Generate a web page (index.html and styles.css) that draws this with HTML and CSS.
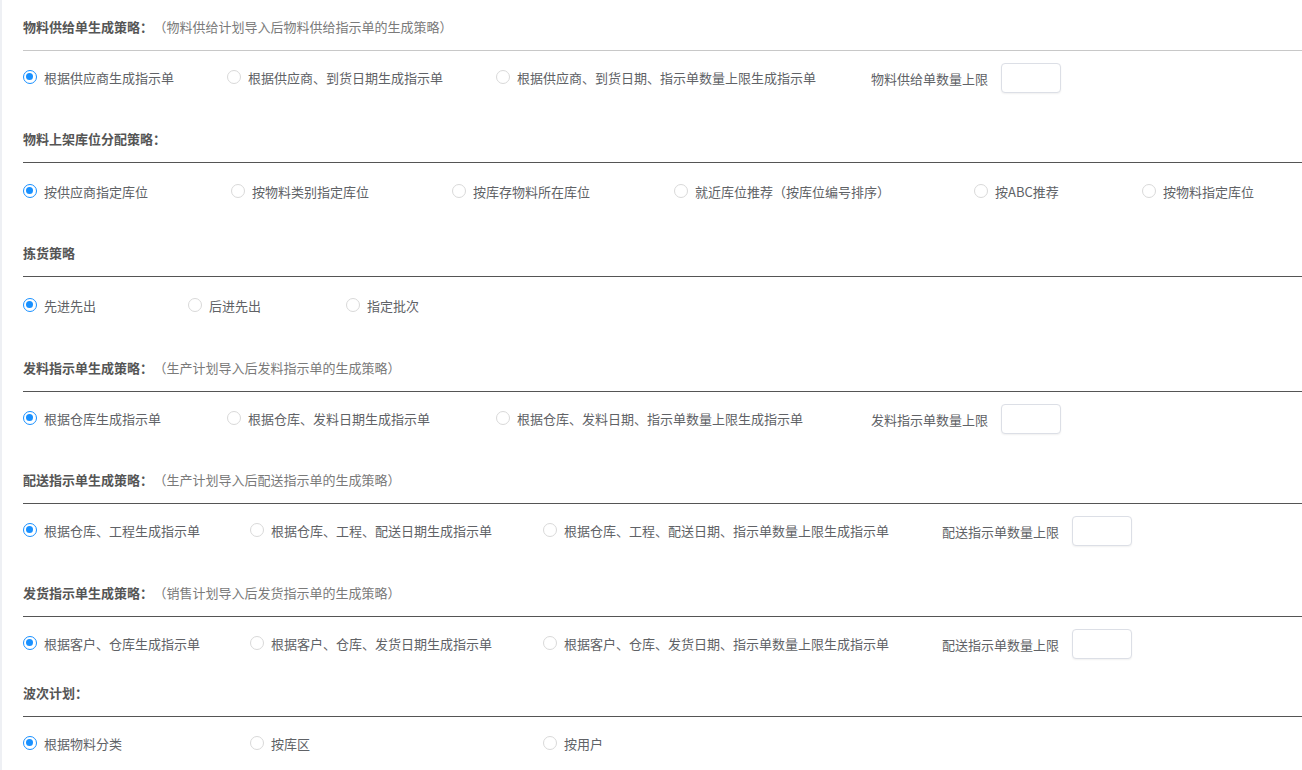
FILE: index.html
```html
<!DOCTYPE html>
<html lang="zh-CN">
<head>
<meta charset="utf-8">
<title>策略配置</title>
<link rel="stylesheet" href="styles.css">
</head>
<body>
<div class="page">

  <section class="sec">
    <div class="head light"><span class="title">物料供给单生成策略：</span><span class="sub">（物料供给计划导入后物料供给指示单的生成策略）</span></div>
    <div class="row">
      <label class="opt w204"><span class="radio on"></span>根据供应商生成指示单</label>
      <label class="opt w269"><span class="radio"></span>根据供应商、到货日期生成指示单</label>
      <label class="opt w375"><span class="radio"></span>根据供应商、到货日期、指示单数量上限生成指示单</label>
      <span class="lim">物料供给单数量上限</span><input class="num" type="text">
    </div>
  </section>

  <section class="sec">
    <div class="head"><span class="title">物料上架库位分配策略：</span></div>
    <div class="row low">
      <label class="opt w208"><span class="radio on"></span>按供应商指定库位</label>
      <label class="opt w221"><span class="radio"></span>按物料类别指定库位</label>
      <label class="opt w222"><span class="radio"></span>按库存物料所在库位</label>
      <label class="opt w300"><span class="radio"></span>就近库位推荐（按库位编号排序）</label>
      <label class="opt w168"><span class="radio"></span>按ABC推荐</label>
      <label class="opt"><span class="radio"></span>按物料指定库位</label>
    </div>
  </section>

  <section class="sec wide">
    <div class="head"><span class="title">拣货策略</span></div>
    <div class="row low">
      <label class="opt w165"><span class="radio on"></span>先进先出</label>
      <label class="opt w158"><span class="radio"></span>后进先出</label>
      <label class="opt"><span class="radio"></span>指定批次</label>
    </div>
  </section>

  <section class="sec">
    <div class="head"><span class="title">发料指示单生成策略：</span><span class="sub">（生产计划导入后发料指示单的生成策略）</span></div>
    <div class="row">
      <label class="opt w204"><span class="radio on"></span>根据仓库生成指示单</label>
      <label class="opt w269"><span class="radio"></span>根据仓库、发料日期生成指示单</label>
      <label class="opt w375"><span class="radio"></span>根据仓库、发料日期、指示单数量上限生成指示单</label>
      <span class="lim">发料指示单数量上限</span><input class="num" type="text">
    </div>
  </section>

  <section class="sec wide">
    <div class="head"><span class="title">配送指示单生成策略：</span><span class="sub">（生产计划导入后配送指示单的生成策略）</span></div>
    <div class="row">
      <label class="opt w227"><span class="radio on"></span>根据仓库、工程生成指示单</label>
      <label class="opt w293"><span class="radio"></span>根据仓库、工程、配送日期生成指示单</label>
      <label class="opt w399"><span class="radio"></span>根据仓库、工程、配送日期、指示单数量上限生成指示单</label>
      <span class="lim">配送指示单数量上限</span><input class="num" type="text">
    </div>
  </section>

  <section class="sec short">
    <div class="head"><span class="title">发货指示单生成策略：</span><span class="sub">（销售计划导入后发货指示单的生成策略）</span></div>
    <div class="row">
      <label class="opt w227"><span class="radio on"></span>根据客户、仓库生成指示单</label>
      <label class="opt w293"><span class="radio"></span>根据客户、仓库、发货日期生成指示单</label>
      <label class="opt w399"><span class="radio"></span>根据客户、仓库、发货日期、指示单数量上限生成指示单</label>
      <span class="lim">配送指示单数量上限</span><input class="num" type="text">
    </div>
  </section>

  <section class="sec">
    <div class="head"><span class="title">波次计划：</span></div>
    <div class="row">
      <label class="opt w227"><span class="radio on"></span>根据物料分类</label>
      <label class="opt w293"><span class="radio"></span>按库区</label>
      <label class="opt"><span class="radio"></span>按用户</label>
    </div>
  </section>

</div>
</body>
</html>
```

FILE: styles.css
```css
html, body {
  margin: 0;
  padding: 0;
  background: #ffffff;
}
body {
  font-family: "Noto Sans CJK SC", "Microsoft YaHei", "Liberation Sans", sans-serif;
  font-size: 13px;
  color: #606266;
  border-left: 2px solid #eef0f4;
  height: 770px;
  overflow: hidden;
  box-sizing: border-box;
}
.page {
  padding: 17px 0 0 21px;
}
.sec {
  margin-bottom: 36px;
}
.sec.wide {
  margin-bottom: 37px;
}
.sec.short {
  margin-bottom: 24px;
}
.head {
  height: 20px;
  line-height: 20px;
  padding-bottom: 13px;
  border-bottom: 1px solid #555555;
  white-space: nowrap;
}
.head.light {
  border-bottom-color: #c8c8c8;
}
.title {
  font-weight: bold;
  color: #555555;
  font-size: 13px;
}
.sub {
  color: #7a7a7a;
  font-size: 13px;
  margin-left: 7px;
}
.row {
  display: flex;
  align-items: center;
  height: 30px;
  margin-top: 12px;
  white-space: nowrap;
}
.row.low {
  margin-top: 14px;
}
.opt {
  display: flex;
  align-items: center;
  flex: none;
  line-height: 20px;
  cursor: pointer;
}
.radio {
  box-sizing: border-box;
  width: 14px;
  height: 14px;
  border-radius: 50%;
  border: 1px solid #d9d9d9;
  background: #fff;
  margin: 0 7px 0 0;
  flex: none;
  position: relative;
  top: -1px;
}
.radio.on {
  border: 1.5px solid #1890ff;
}
.radio.on::after {
  content: "";
  position: absolute;
  left: 2px;
  top: 2px;
  width: 7px;
  height: 7px;
  border-radius: 50%;
  background: #1890ff;
}
.w158 { width: 158px; }
.w165 { width: 165px; }
.w168 { width: 168px; }
.w204 { width: 204px; }
.w208 { width: 208px; }
.w221 { width: 221px; }
.w222 { width: 222px; }
.w227 { width: 227px; }
.w269 { width: 269px; }
.w293 { width: 293px; }
.w300 { width: 300px; }
.w375 { width: 375px; }
.w399 { width: 399px; }
.lim {
  margin-right: 13px;
}
.num {
  box-sizing: border-box;
  width: 60px;
  height: 30px;
  border: 1px solid #dcdfe6;
  border-radius: 4px;
  box-shadow: 0 1px 2px rgba(0,0,0,0.06);
  outline: none;
  padding: 0 6px;
  font: inherit;
  margin: 0;
}
```
